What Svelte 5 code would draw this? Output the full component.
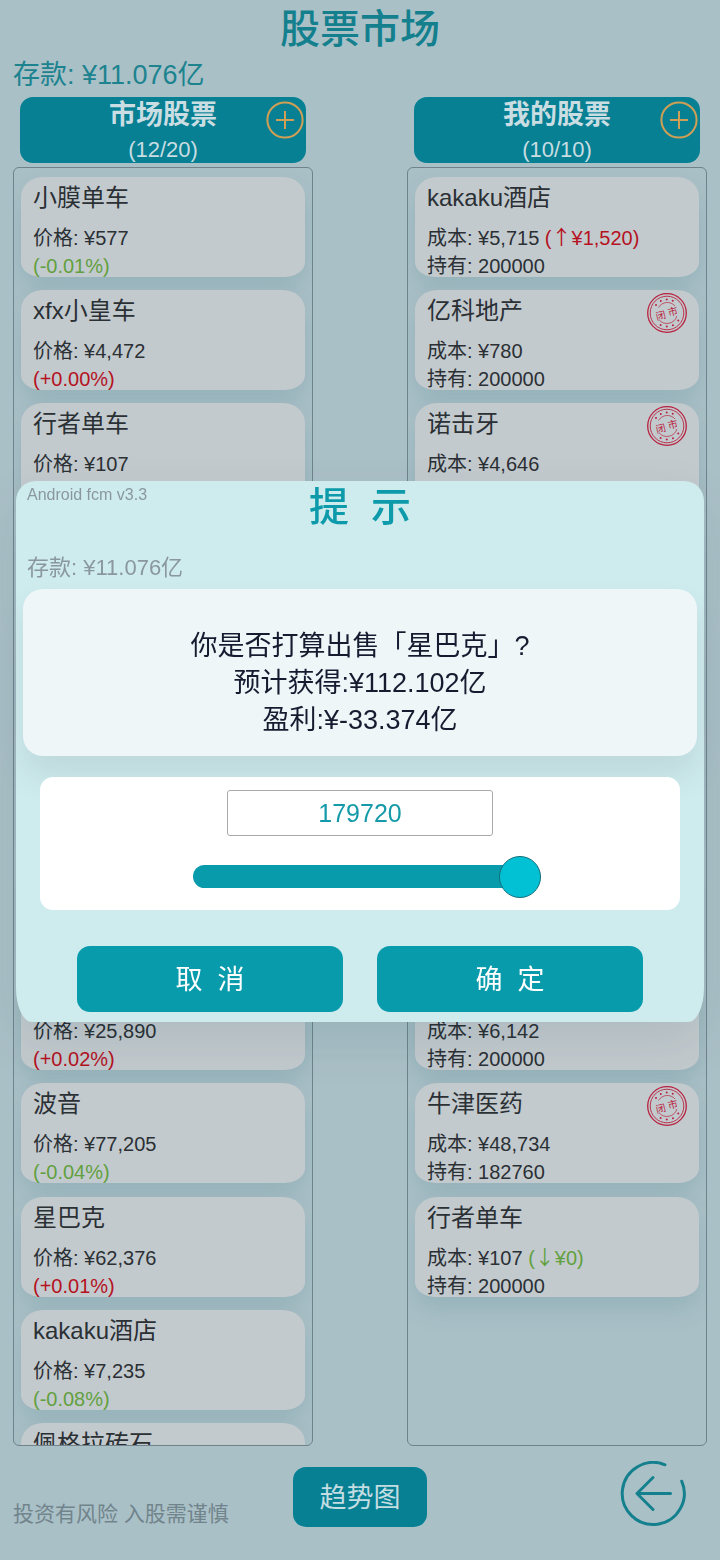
<script>
  const market = [
    { name: '小膜单车', price: '577', change: '-0.01%' },
    { name: 'xfx小皇车', price: '4,472', change: '+0.00%' },
    { name: '行者单车', price: '107' },
    {}, {}, {}, {},
    { price: '25,890', change: '+0.02%' },
    { name: '波音', price: '77,205', change: '-0.04%' },
    { name: '星巴克', price: '62,376', change: '+0.01%' },
    { name: 'kakaku酒店', price: '7,235', change: '-0.08%' },
    { name: '佩格拉砖石' }
  ];
  const owned = [
    { name: 'kakaku酒店', cost: '5,715', held: 200000, up: '1,520' },
    { name: '亿科地产', cost: '780', held: 200000, closed: true },
    { name: '诺击牙', cost: '4,646', closed: true },
    {}, {}, {}, {},
    { cost: '6,142', held: 200000 },
    { name: '牛津医药', cost: '48,734', held: 182760, closed: true },
    { name: '行者单车', cost: '107', held: 200000, down: '0' }
  ];
  const dots = [-144, -117, -91, -65, 34, 64, 91, 118].map((a) => ({
    x: 20 + 13.6 * Math.cos((a * Math.PI) / 180),
    y: 20 + 13.6 * Math.sin((a * Math.PI) / 180)
  }));
  let amount = $state(179720);
</script>

{#snippet plus(label)}
  <button class="add" aria-label={label}>
    <svg viewBox="0 0 38 38"><circle cx="19" cy="19" r="17.6" /><path d="M19 10v18M10 19h18" /></svg>
  </button>
{/snippet}

{#snippet stamp()}
  <svg class="stamp" viewBox="0 0 40 40">
    <circle cx="20" cy="20" r="19.3" stroke-width="1.3" />
    <circle cx="20" cy="20" r="16.8" stroke-width="0.9" />
    <path d="M11.5 14.5A10.2 10.2 0 0 1 28 13M29.8 23A10.2 10.2 0 0 1 12 26.6" stroke-width="0.7" />
    {#each dots as d}<circle class="dot" cx={d.x} cy={d.y} r="1" />{/each}
    <text x="8.5" y="26" transform="rotate(-14 14 22)">闭</text>
    <text x="20.5" y="22" transform="rotate(-14 26 18)">市</text>
  </svg>
{/snippet}

<main>
  <h1>股票市场</h1>
  <p class="balance">存款: ¥11.076亿</p>

  <div class="columns">
    <section>
      <header><h2>市场股票</h2><span>(12/20)</span>{@render plus('市场股票')}</header>
      <div class="list">
        {#each market as s}
          <article>
            <h3>{s.name ?? ''}</h3>
            {#if s.price}<p>价格: ¥{s.price}</p>{/if}
            {#if s.change}<p class={s.change[0] === '-' ? 'green' : 'red'}>({s.change})</p>{/if}
          </article>
        {/each}
      </div>
    </section>
    <section>
      <header><h2>我的股票</h2><span>(10/10)</span>{@render plus('我的股票')}</header>
      <div class="list">
        {#each owned as s}
          <article>
            <h3>{s.name ?? ''}</h3>
            {#if s.cost}
              <p>
                成本: ¥{s.cost}
                {#if s.up}<span class="red">(<i>↑</i>¥{s.up})</span>{/if}
                {#if s.down}<span class="green">(<i>↓</i>¥{s.down})</span>{/if}
              </p>
            {/if}
            {#if s.held}<p>持有: {s.held}</p>{/if}
            {#if s.closed}{@render stamp()}{/if}
          </article>
        {/each}
      </div>
    </section>
  </div>

  <footer>
    <p>投资有风险 入股需谨慎</p>
    <button class="trend">趋势图</button>
    <button class="back" aria-label="返回">
      <svg viewBox="0 0 66 66">
        <path d="M45 3.8A31 31 0 1 0 61.7 20.2" />
        <path d="M50.5 32.5H17M33 16.5L17 32.5L33 48.5" />
      </svg>
    </button>
  </footer>
</main>

<div class="overlay">
  <div class="dialog" role="dialog" aria-labelledby="dialog-title">
    <div class="top">
      <small>Android fcm v3.3</small>
      <h2 id="dialog-title">提&nbsp; 示</h2>
    </div>
    <p class="funds">存款: ¥11.076亿</p>
    <div class="message">
      <p>你是否打算出售「星巴克」?</p>
      <p>预计获得:¥112.102亿</p>
      <p>盈利:¥-33.374亿</p>
    </div>
    <div class="quantity">
      <input type="text" inputmode="numeric" aria-labelledby="dialog-title" bind:value={amount} />
      <div class="slider">
        <input type="range" min="0" max="179720" aria-labelledby="dialog-title" bind:value={amount} />
      </div>
    </div>
    <div class="actions">
      <button>取&nbsp; 消</button>
      <button>确&nbsp; 定</button>
    </div>
  </div>
</div>

<style>
  :global(body) {
    background: #aac0c7;
    font-family: 'Liberation Sans', 'Noto Sans CJK SC', sans-serif;
  }
  * { box-sizing: border-box; }
  h1, h2, h3, p { margin: 0; font-weight: 400; }
  button { font: inherit; border: 0; padding: 0; cursor: pointer; }
  svg { display: block; fill: none; }
  i { font-family: 'Noto Sans CJK SC', sans-serif; font-style: normal; line-height: 1; }

  main {
    display: flex;
    flex-direction: column;
    height: 100vh;
    min-height: 1100px;
    padding: 0 13px;
    color: #2b3035;
  }
  h1 {
    font-size: 40px;
    line-height: 58px;
    font-weight: 500;
    text-align: center;
    color: #14808e;
  }
  .balance {
    font-size: 27px;
    line-height: 35px;
    margin-bottom: 4px;
    color: #1c838f;
  }
  .columns {
    flex: 1;
    min-height: 0;
    display: grid;
    grid-template-columns: 1fr 1fr;
    gap: 94px;
  }
  section {
    display: flex;
    flex-direction: column;
    gap: 4px;
    min-height: 0;
    min-width: 0;
  }
  header {
    position: relative;
    margin: 0 7px;
    height: 66px;
    border-radius: 13px;
    background: #078093;
    color: #c9dde2;
    text-align: center;
  }
  header h2 {
    font-size: 27px;
    line-height: 36px;
    font-weight: 700;
  }
  header span {
    display: block;
    font-size: 22px;
    line-height: 34px;
  }
  .add {
    position: absolute;
    right: 2px;
    top: 4px;
    width: 38px;
    height: 38px;
    background: none;
  }
  .add svg { stroke: #cf9f56; stroke-width: 2; }
  .list {
    flex: 1;
    min-height: 0;
    overflow: hidden;
    padding: 9px 7px;
    border: 1px solid #70838c;
    border-radius: 6px;
  }
  article {
    position: relative;
    height: 100px;
    margin-bottom: 13px;
    padding: 0 12px;
    border-radius: 22px 22px 20px 20px / 20px 20px 15px 15px;
    background: #c3cace;
    box-shadow: 0 13px 26px rgba(0, 85, 95, 0.12);
  }
  article:nth-child(3n) { margin-bottom: 14px; }
  article h3 {
    height: 47px;
    font-size: 24px;
    line-height: 42px;
  }
  article p {
    font-size: 20px;
    line-height: 28px;
    white-space: nowrap;
  }
  .red { color: #b5121f; }
  .green { color: #62a03f; }
  .stamp {
    position: absolute;
    right: 12px;
    top: 3px;
    width: 40px;
    height: 40px;
    stroke: #b8223f;
  }
  .stamp .dot { fill: #b8223f; stroke: none; }
  .stamp text {
    fill: #b8223f;
    stroke: none;
    font-size: 10px;
    font-weight: 400;
  }

  footer {
    display: grid;
    grid-template-columns: 1fr auto 1fr;
    align-items: start;
    height: 114px;
    padding-top: 15px;
  }
  footer p {
    margin-top: 37px;
    font-size: 21px;
    line-height: 32px;
    color: #71848c;
  }
  .trend {
    margin-top: 6px;
    width: 134px;
    height: 60px;
    padding-bottom: 4px;
    border-radius: 13px;
    background: #078093;
    color: #c3dde2;
    font-size: 27px;
  }
  .back {
    justify-self: end;
    margin-right: 21px;
    width: 66px;
    height: 66px;
    background: none;
  }
  .back svg {
    stroke: #14808e;
    stroke-width: 3;
    stroke-linecap: round;
    stroke-linejoin: round;
  }

  .overlay {
    position: fixed;
    inset: 0;
    display: flex;
    align-items: center;
    padding: 0 16px 57px;
  }
  .dialog {
    flex: 1;
    padding: 0 7px 10px;
    border-radius: 20px 20px 16px 16px / 20px 20px 34px 34px;
    background: #ceebed;
    box-shadow: 0 20px 50px rgba(0, 60, 70, 0.1);
  }
  .top {
    display: grid;
    grid-template-columns: 1fr auto 1fr;
    height: 68px;
    padding: 0 4px;
  }
  .top small {
    font-size: 16px;
    line-height: 28px;
    color: #8a989e;
  }
  .top h2 {
    font-size: 40px;
    line-height: 52px;
    font-weight: 500;
    color: #0d9aaa;
  }
  .funds {
    padding: 0 4px;
    font-size: 22px;
    line-height: 38px;
    margin-bottom: 2px;
    color: #8a989e;
  }
  .message {
    padding: 39px 0 17px;
    border-radius: 20px;
    background: #eef6f8;
    box-shadow: 0 20px 30px rgba(90, 110, 120, 0.14);
    text-align: center;
    font-size: 27px;
    line-height: 37px;
    color: #161c30;
  }
  .quantity {
    position: relative;
    display: flex;
    flex-direction: column;
    align-items: center;
    gap: 19px;
    margin: 21px 17px 36px;
    padding: 13px 0;
    border-radius: 13px;
    background: #fff;
  }
  input[type='text'] {
    width: 266px;
    height: 46px;
    border: 1px solid #aaa;
    border-radius: 3px;
    background: #fff;
    color: #149aa8;
    font: inherit;
    font-size: 25px;
    text-align: center;
  }
  .slider { width: 334px; }
  input[type='range'] {
    appearance: none;
    display: block;
    width: calc(100% + 14px);
    height: 42px;
    margin: 0;
    background: none;
  }
  input[type='range']::-webkit-slider-runnable-track {
    height: 23px;
    border-radius: 12px;
    background: linear-gradient(to right, #089bac calc(100% - 21px), transparent 0);
  }
  input[type='range']::-webkit-slider-thumb {
    appearance: none;
    width: 42px;
    height: 42px;
    margin-top: -9px;
    border: 1px solid #15707c;
    border-radius: 50%;
    background: #02c1d5;
  }
  .actions {
    display: flex;
    gap: 34px;
    padding: 0 54px;
  }
  .actions button {
    flex: 1;
    height: 66px;
    padding-bottom: 4px;
    border-radius: 13px;
    background: #089bac;
    color: #fff;
    font-size: 27px;
  }
</style>
